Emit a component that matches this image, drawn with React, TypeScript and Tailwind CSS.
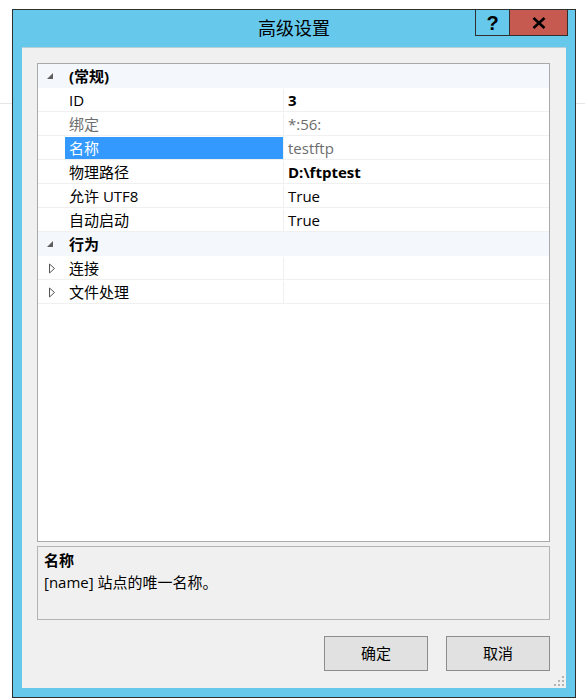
import React from 'react';

type Row =
  | { kind: 'cat'; label: string }
  | {
      kind: 'prop';
      name: string;
      value?: string;
      bold?: boolean;
      dim?: boolean;
      dimValue?: boolean;
      selected?: boolean;
      expandable?: boolean;
    };

const rows: Row[] = [
  { kind: 'cat', label: '(常规)' },
  { kind: 'prop', name: 'ID', value: '3', bold: true },
  { kind: 'prop', name: '绑定', value: '*:56:', dim: true, dimValue: true },
  { kind: 'prop', name: '名称', value: 'testftp', selected: true, dimValue: true },
  { kind: 'prop', name: '物理路径', value: 'D:\\ftptest', bold: true },
  { kind: 'prop', name: '允许 UTF8', value: 'True' },
  { kind: 'prop', name: '自动启动', value: 'True' },
  { kind: 'cat', label: '行为' },
  { kind: 'prop', name: '连接', expandable: true },
  { kind: 'prop', name: '文件处理', expandable: true },
];

const font = "font-['Open_Sans','Noto_Sans_CJK_SC',sans-serif]";

function Collapse() {
  return (
    <svg width="8" height="8" viewBox="0 0 8 8">
      <path d="M7 1 L7 7 L1 7 Z" fill="#5f5f5f" />
    </svg>
  );
}

function Expand() {
  return (
    <svg width="8" height="11" viewBox="0 0 8 11">
      <path d="M1.5 1 L6.5 5.5 L1.5 10 Z" fill="none" stroke="#555" strokeWidth="1" />
    </svg>
  );
}

function Grip() {
  const dots = [
    [8, 0],
    [4, 4],
    [8, 4],
    [0, 8],
    [4, 8],
    [8, 8],
  ];
  return (
    <svg width="10" height="10" viewBox="0 0 10 10">
      {dots.map(([x, y]) => (
        <rect key={`${x}-${y}`} x={x} y={y} width="2" height="2" fill="#b4b4b4" />
      ))}
    </svg>
  );
}

function GridRow({ row }: { row: Row }) {
  if (row.kind === 'cat') {
    return (
      <div className="flex h-[24px] items-center bg-[#f4f7fb] pt-px">
        <div className="flex w-[27px] justify-end pr-[11px] pb-[2px]">
          <Collapse />
        </div>
        <div className="pl-[4px] font-bold text-black">{row.label}</div>
      </div>
    );
  }
  return (
    <div className="flex h-[24px] border-b border-[#f0f0f0] pt-px">
      <div className="flex w-[27px] items-center justify-end pr-[9px]">
        {row.expandable && <Expand />}
      </div>
      <div
        className={
          row.selected
            ? 'flex w-[218px] items-center bg-[#3399ff] pl-[4px] text-white'
            : row.dim
              ? 'flex w-[218px] items-center pl-[4px] text-[#6d6d6d]'
              : 'flex w-[218px] items-center pl-[4px] text-black'
        }
      >
        {row.name}
      </div>
      <div
        className={
          row.bold
            ? 'flex flex-1 items-center border-l border-[#f0f0f0] pl-[4px] font-bold text-black'
            : row.dimValue
              ? 'flex flex-1 items-center border-l border-[#f0f0f0] pl-[4px] text-[#6d6d6d]'
              : 'flex flex-1 items-center border-l border-[#f0f0f0] pl-[4px] text-black'
        }
      >
        {row.value}
      </div>
    </div>
  );
}

export default function App() {
  return (
    <div className={`relative h-[700px] w-[585px] overflow-hidden bg-white ${font}`}>
      {/* page behind the dialog */}
      <div className="absolute top-[103px] left-0 h-px w-full bg-[#e6e6e6]" />

      <div className="relative pt-[9px] pl-[12px]">
        <div className="flex h-[689px] w-[564px] flex-col border border-[#2f2f2f] bg-[#66c9ec]">
          {/* title bar */}
          <div className="relative flex h-[37px] items-center justify-center">
            <span className="pb-[1px] text-[18px] leading-none text-black">高级设置</span>
            <div className="absolute top-[-1px] right-[7px] flex h-[27px]">
              <div className="flex w-[35px] items-center justify-center border border-[#2f2f2f] bg-[#66c9ec]">
                <span className="font-['Liberation_Sans',sans-serif] text-[20px] leading-none font-bold text-black">
                  ?
                </span>
              </div>
              <div className="-ml-px flex w-[59px] items-center justify-center border border-[#2f2f2f] bg-[#c75a50]">
                <svg width="14" height="12" viewBox="0 0 14 12">
                  <path d="M1.5 1 L12.5 11 M12.5 1 L1.5 11" stroke="#000" strokeWidth="2.6" />
                </svg>
              </div>
            </div>
          </div>

          {/* client area */}
          <div className="relative mx-[9px] flex h-[641px] flex-col border-t border-[#b7cfd9] bg-[#f0f0f0] pt-[15px] pr-[16px] pl-[15px] text-[15px]">
            <div className="h-[479px] border border-[#a9a9a9] bg-white leading-none">
              {rows.map((row, i) => (
                <GridRow key={i} row={row} />
              ))}
            </div>

            <div className="mt-[4px] h-[74px] border border-[#b4b4b4] bg-[#f0f0f0] px-[6px] pt-[2px] leading-[22px] text-black">
              <div className="font-bold">名称</div>
              <div>[name] 站点的唯一名称。</div>
            </div>

            <div className="mt-[16px] flex justify-end gap-[18px]">
              <button className="h-[35px] w-[104px] border border-[#8d8d8d] bg-[#e1e1e1] pb-px text-[15px] text-black">
                确定
              </button>
              <button className="h-[35px] w-[104px] border border-[#8d8d8d] bg-[#e1e1e1] pb-px text-[15px] text-black">
                取消
              </button>
            </div>

            <div className="absolute right-[2px] bottom-[2px]">
              <Grip />
            </div>
          </div>
        </div>
      </div>
    </div>
  );
}
